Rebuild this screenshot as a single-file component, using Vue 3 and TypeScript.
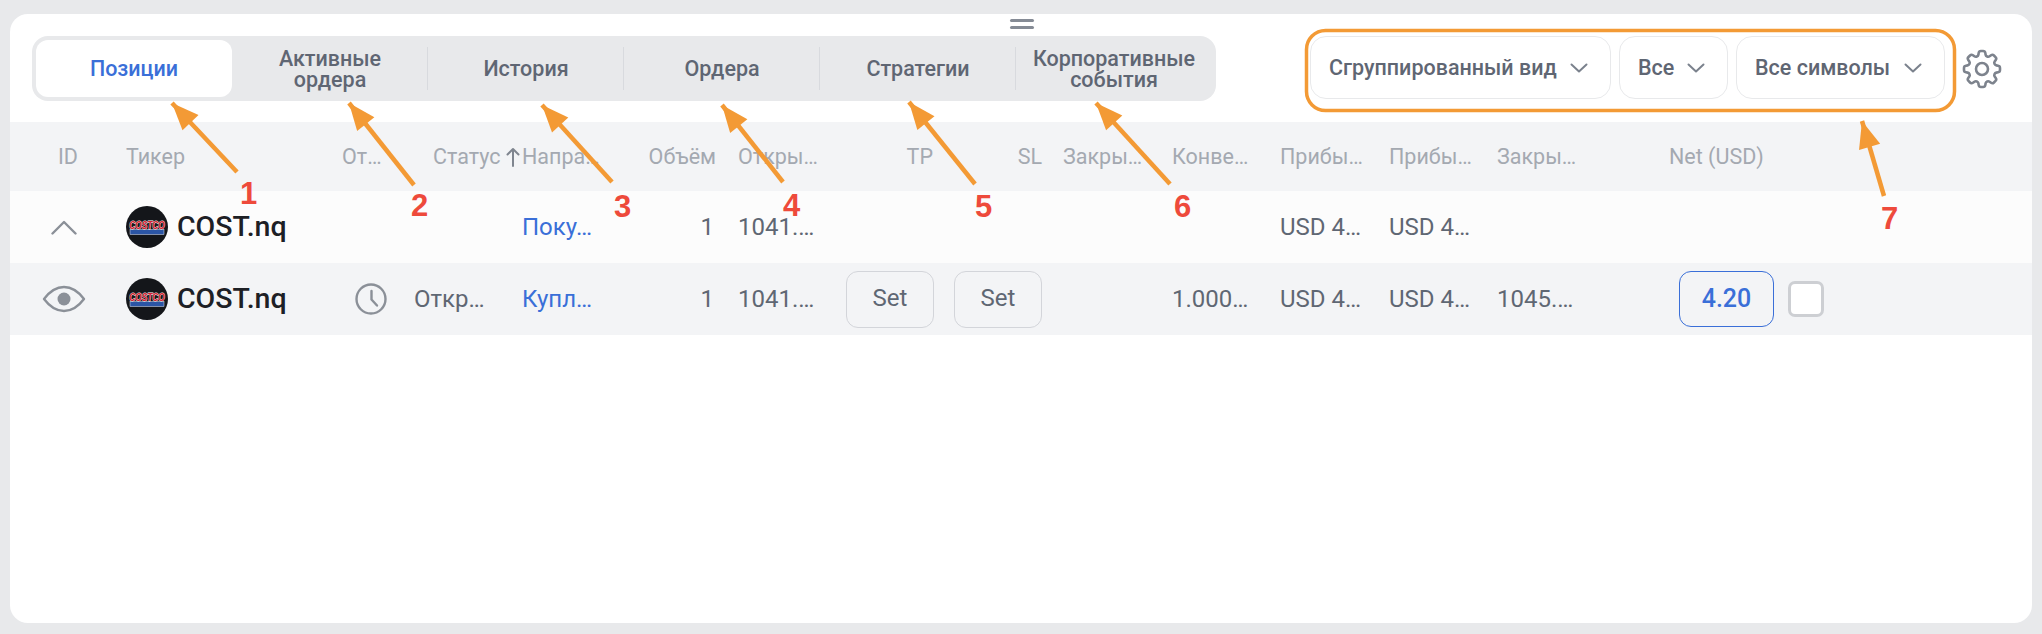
<script setup lang="ts">
interface Tab { label: string; active?: boolean; sep?: boolean }
const tabs: Tab[] = [
  { label: 'Позиции', active: true },
  { label: 'Активные ордера', sep: true },
  { label: 'История', sep: true },
  { label: 'Ордера', sep: true },
  { label: 'Стратегии', sep: true },
  { label: 'Корпоративные события' },
]
const selects = ['Сгруппированный вид', 'Все', 'Все символы']
const arrows = [
  { x1: 237, y1: 172, x2: 172, y2: 103 },
  { x1: 414, y1: 185, x2: 349, y2: 103 },
  { x1: 612, y1: 182, x2: 542, y2: 105 },
  { x1: 783, y1: 182, x2: 722, y2: 105 },
  { x1: 975, y1: 184, x2: 909, y2: 102 },
  { x1: 1170, y1: 184, x2: 1096, y2: 103 },
  { x1: 1884, y1: 196, x2: 1862, y2: 121 },
]
function head(a: { x1: number; y1: number; x2: number; y2: number }): string {
  const dx = a.x1 - a.x2
  const dy = a.y1 - a.y2
  const len = Math.hypot(dx, dy)
  const ux = dx / len
  const uy = dy / len
  const bx = a.x2 + ux * 27
  const by = a.y2 + uy * 27
  const w = 11
  return `${a.x2},${a.y2} ${bx - uy * w},${by + ux * w} ${bx + uy * w},${by - ux * w}`
}
const marks = [
  { n: '1', x: 240, y: 179 },
  { n: '2', x: 411, y: 191 },
  { n: '3', x: 614, y: 192 },
  { n: '4', x: 783, y: 191 },
  { n: '5', x: 975, y: 192 },
  { n: '6', x: 1174, y: 192 },
  { n: '7', x: 1881, y: 204 },
]
const cog = 'M10.343 3.94c.09-.542.56-.94 1.11-.94h1.093c.55 0 1.02.398 1.11.94l.149.894c.07.424.384.764.78.93.398.164.855.142 1.205-.108l.737-.527a1.125 1.125 0 0 1 1.45.12l.773.774c.39.389.44 1.002.12 1.45l-.527.737c-.25.35-.272.806-.107 1.204.165.397.505.71.93.78l.893.15c.543.09.94.559.94 1.109v1.094c0 .55-.397 1.02-.94 1.11l-.894.149c-.424.07-.764.383-.929.78-.165.398-.143.854.107 1.204l.527.738c.32.447.269 1.06-.12 1.45l-.774.773a1.125 1.125 0 0 1-1.449.12l-.738-.527c-.35-.25-.806-.272-1.203-.107-.398.165-.71.505-.781.929l-.149.894c-.09.542-.56.94-1.11.94h-1.094c-.55 0-1.019-.398-1.11-.94l-.148-.894c-.071-.424-.384-.764-.781-.93-.398-.164-.854-.142-1.204.108l-.738.527c-.447.32-1.06.269-1.45-.12l-.773-.774a1.125 1.125 0 0 1-.12-1.45l.527-.737c.25-.35.272-.806.108-1.204-.165-.397-.506-.71-.93-.78l-.894-.15c-.542-.09-.94-.56-.94-1.109v-1.094c0-.55.398-1.02.94-1.11l.894-.149c.424-.07.765-.383.93-.78.165-.398.143-.854-.108-1.204l-.526-.738a1.125 1.125 0 0 1 .12-1.45l.773-.773a1.125 1.125 0 0 1 1.45-.12l.737.527c.35.25.807.272 1.204.107.397-.165.71-.505.78-.929l.15-.894Z'
</script>

<template>
  <div class="page">
    <div class="card">
      <div class="handle"><span></span><span></span></div>
      <div class="toolbar">
        <div class="tabs">
          <div v-for="t in tabs" :key="t.label" class="tab" :class="{ active: t.active, sep: t.sep }">
            <span class="tab-label">{{ t.label }}</span>
          </div>
        </div>
        <div class="selects">
          <div v-for="s in selects" :key="s" class="select">
            <span>{{ s }}</span>
            <svg class="caret" viewBox="0 0 18 10" width="18" height="10"><path d="M1.5 1.5 9 8.5l7.5-7" fill="none" stroke="#7b828d" stroke-width="2" stroke-linecap="round" stroke-linejoin="round" /></svg>
          </div>
        </div>
        <svg class="gear" viewBox="0 0 24 24" width="48" height="48" fill="none" stroke="#7d838d" stroke-width="1.3" stroke-linejoin="round">
          <path :d="cog" />
          <circle cx="12" cy="12" r="3" />
        </svg>
      </div>

      <div class="table">
        <div class="row header">
          <div class="c c-id">ID</div>
          <div class="c c-ticker">Тикер</div>
          <div class="c c-icon">От…</div>
          <div class="c c-status head-status">Статус
            <svg class="sort" viewBox="0 0 14 20" width="14" height="20"><path d="M7 19V2M1.5 7.5 7 2l5.5 5.5" fill="none" stroke="#7f858f" stroke-width="2" stroke-linecap="round" stroke-linejoin="round" /></svg>
          </div>
          <div class="c c-dir">Напра…</div>
          <div class="c c-vol">Объём</div>
          <div class="c c-open">Откры…</div>
          <div class="c c-tp right">TP</div>
          <div class="c c-sl right">SL</div>
          <div class="c">Закры…</div>
          <div class="c">Конве…</div>
          <div class="c">Прибы…</div>
          <div class="c">Прибы…</div>
          <div class="c">Закры…</div>
          <div class="c c-net">Net (USD)</div>
        </div>

        <div class="row body first">
          <div class="c c-id icon-cell">
            <svg viewBox="0 0 26 15" width="26" height="15"><path d="M1.5 13.5 13 2l11.5 11.5" fill="none" stroke="#8b9098" stroke-width="2.4" stroke-linecap="round" stroke-linejoin="round" /></svg>
          </div>
          <div class="c c-ticker ticker">
            <svg class="logo" viewBox="0 0 42 42" width="42" height="42">
              <circle cx="21" cy="21" r="21" fill="#14161a" />
              <rect x="4" y="23.500" width="34" height="5" fill="#2b55a5" stroke="#e8ecf5" stroke-width="0.500" />
              <text transform="translate(21 22.500) scale(0.76 1)" text-anchor="middle" class="logo-text">COSTCO</text>
            </svg>
            <span class="ticker-name">COST.nq</span>
          </div>
          <div class="c c-icon"></div>
          <div class="c c-status"></div>
          <div class="c c-dir blue">Поку…</div>
          <div class="c c-vol">1</div>
          <div class="c c-open">1041.…</div>
          <div class="c c-tp"></div>
          <div class="c c-sl"></div>
          <div class="c"></div>
          <div class="c"></div>
          <div class="c">USD 4…</div>
          <div class="c">USD 4…</div>
          <div class="c"></div>
          <div class="c c-net"></div>
        </div>

        <div class="row body second">
          <div class="c c-id icon-cell">
            <svg viewBox="0 0 44 28" width="44" height="28"><path d="M2 14C8 6 14.500 2 22 2s14 4 20 12c-6 8-12.500 12-20 12S8 22 2 14Z" fill="none" stroke="#8b9098" stroke-width="2.400" stroke-linejoin="round" /><circle cx="22" cy="14" r="6.500" fill="#8b9098" /></svg>
          </div>
          <div class="c c-ticker ticker">
            <svg class="logo" viewBox="0 0 42 42" width="42" height="42">
              <circle cx="21" cy="21" r="21" fill="#14161a" />
              <rect x="4" y="23.500" width="34" height="5" fill="#2b55a5" stroke="#e8ecf5" stroke-width="0.500" />
              <text transform="translate(21 22.500) scale(0.76 1)" text-anchor="middle" class="logo-text">COSTCO</text>
            </svg>
            <span class="ticker-name">COST.nq</span>
          </div>
          <div class="c c-icon icon-cell">
            <svg viewBox="0 0 32 32" width="32" height="32" fill="none" stroke="#8b9098" stroke-width="2.400" stroke-linecap="round" stroke-linejoin="round"><circle cx="16" cy="16" r="14.500" /><path d="M16.500 8v8.500l5.500 6" /></svg>
          </div>
          <div class="c c-status">Откр…</div>
          <div class="c c-dir blue">Купл…</div>
          <div class="c c-vol">1</div>
          <div class="c c-open">1041.…</div>
          <div class="c c-tp"><button class="set">Set</button></div>
          <div class="c c-sl"><button class="set">Set</button></div>
          <div class="c"></div>
          <div class="c">1.000…</div>
          <div class="c">USD 4…</div>
          <div class="c">USD 4…</div>
          <div class="c">1045.…</div>
          <div class="c c-net net-cell">
            <div class="net">4.20</div>
            <div class="check"></div>
          </div>
        </div>
      </div>
    </div>

    <svg class="overlay" viewBox="0 0 2042 634" width="2042" height="634">
      <g v-for="(a, i) in arrows" :key="i">
        <line :x1="a.x1" :y1="a.y1" :x2="a.x2" :y2="a.y2" stroke="#f39a35" stroke-width="4.500" />
        <polygon :points="head(a)" fill="#f39a35" />
      </g>
      <rect x="1306.500" y="30.500" width="648" height="80" rx="19" fill="none" stroke="#f39a35" stroke-width="3.500" />
    </svg>
    <span v-for="m in marks" :key="m.n" class="mark" :style="{ left: m.x + 'px', top: m.y + 'px' }">{{ m.n }}</span>
  </div>
</template>

<style>
html, body { margin: 0; background: #e8e9eb; }
</style>

<style scoped>
.page {
  position: relative;
  width: 2042px;
  height: 634px;
  padding: 14px 10px 11px;
  box-sizing: border-box;
  background: #e8e9eb;
  font-family: Roboto, "Noto Sans", sans-serif;
  overflow: hidden;
}
.card {
  position: relative;
  height: 100%;
  background: #fff;
  border-radius: 18px;
  overflow: hidden;
}
.handle {
  position: absolute;
  left: 1000px;
  top: 5px;
  width: 24px;
  display: flex;
  flex-direction: column;
  gap: 4px;
}
.handle span {
  display: block;
  height: 3px;
  border-radius: 2px;
  background: #858b95;
}
.toolbar {
  display: flex;
  align-items: flex-start;
  height: 108px;
  box-sizing: border-box;
  padding: 22px 0 0 22px;
}
.tabs {
  display: flex;
  width: 1184px;
  height: 65px;
  box-sizing: border-box;
  padding: 4px;
  background: #e8e9eb;
  border-radius: 16px;
}
.tab {
  position: relative;
  width: 196px;
  height: 57px;
  display: flex;
  align-items: center;
  justify-content: center;
  text-align: center;
  font-size: 21.5px;
  font-weight: 500;
  line-height: 21px;
  color: #5f6673;
}
.tab-label { max-width: 172px; }
.tab.active {
  background: #fff;
  color: #3a6fd8;
  border-radius: 12px;
}
.tab.sep::after {
  content: "";
  position: absolute;
  right: 0;
  top: 7px;
  height: 43px;
  width: 1px;
  background: #d8dade;
}
.selects {
  display: flex;
  gap: 8px;
  margin-left: 94px;
}
.select {
  height: 63px;
  box-sizing: border-box;
  padding: 0 22px 0 18px;
  display: flex;
  align-items: center;
  justify-content: space-between;
  border: 1px solid #e8e9eb;
  border-radius: 16px;
  font-size: 21.5px;
  font-weight: 500;
  color: #5f6673;
}
.select:nth-child(1) { width: 301px; }
.select:nth-child(2) { width: 109px; }
.select:nth-child(3) { width: 209px; }
.gear { margin: 9px 0 0 13px; }
.row {
  display: grid;
  grid-template-columns: 108px 216px 73px 108px 108px 108px 108px 108px 109px 109px 108px 109px 108px 108px 1fr;
  align-items: center;
}
.row.header {
  height: 69px;
  background: #f3f4f6;
  color: #a4a9b1;
  font-size: 21.5px;
}
.row.body {
  height: 72px;
  color: #5f6773;
  font-size: 24px;
}
.row.first { background: #fcfcfc; }
.row.second { background: #f3f4f6; }
.c {
  padding-left: 7px;
  white-space: nowrap;
  box-sizing: border-box;
  min-width: 0;
}
.c-id { padding-left: 48px; }
.c-ticker { padding-left: 8px; }
.icon-cell {
  padding-left: 0;
  display: flex;
  align-items: center;
  justify-content: center;
}
.c-icon { padding-left: 8px; }
.c-icon.icon-cell { padding-left: 0; }
.head-status {
  padding-left: 26px;
  display: flex;
  align-items: center;
  gap: 6px;
}
.sort { flex: none; }
.c-vol {
  text-align: right;
  padding-right: 17px;
}
.header .c-vol { padding-right: 15px; }
.right { text-align: right; padding-right: 14px; }
.c-net { padding-left: 71px; }
.ticker {
  display: flex;
  align-items: center;
  gap: 9px;
  font-size: 28.5px;
  font-weight: 500;
  color: #1d2025;
}
.ticker-name { margin-bottom: 2px; }
.logo { flex: none; }
.logo-text {
  font-family: "Liberation Sans", sans-serif;
  font-size: 11px;
  font-weight: 700;
  font-style: italic;
  fill: #d8212f;
  stroke: #fff;
  stroke-width: 0.8px;
  paint-order: stroke;
}
.blue { color: #3a6fd8; }
.set {
  display: block;
  width: 88px;
  height: 57px;
  padding: 0 0 2px;
  background: transparent;
  border: 1px solid #d3d5da;
  border-radius: 12px;
  color: #5f6773;
  font-family: inherit;
  font-size: 24px;
}
.net-cell {
  display: flex;
  align-items: center;
  gap: 14px;
  padding-left: 81px;
}
.net {
  width: 95px;
  height: 56px;
  box-sizing: border-box;
  padding-bottom: 2px;
  display: flex;
  align-items: center;
  justify-content: center;
  border: 1px solid #3a6fd8;
  border-radius: 12px;
  color: #3a6fd8;
  font-weight: 500;
  font-size: 25px;
}
.check {
  width: 36px;
  height: 36px;
  box-sizing: border-box;
  background: #fff;
  border: 3px solid #cdcfd3;
  border-radius: 7px;
}
.overlay {
  position: absolute;
  left: 0;
  top: 0;
  pointer-events: none;
}
.mark {
  position: absolute;
  font-family: "Liberation Sans", sans-serif;
  font-weight: 700;
  font-size: 31px;
  line-height: 30px;
  color: #ee4a3b;
}
</style>
